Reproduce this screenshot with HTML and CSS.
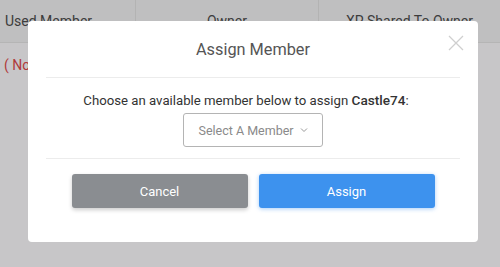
FILE: index.html
```html
<!DOCTYPE html>
<html lang="en">
  <head>
    <meta charset="UTF-8" />
    <meta name="viewport" content="width=device-width, initial-scale=1.0" />
    <title>Assign Member</title>
    <link rel="stylesheet" href="styles.css">
  </head>
  <body>
    <table class="members">
      <thead>
        <tr>
          <th class="col-used">Used Member</th>
          <th class="col-owner">Owner</th>
          <th class="col-xp">XP Shared To Owner</th>
        </tr>
      </thead>
      <tbody>
        <tr>
          <td class="none">( None )</td>
          <td></td>
          <td></td>
        </tr>
      </tbody>
    </table>

    <div class="overlay">
      <div class="modal">
        <button class="close-btn" aria-label="Close">
          <svg width="16" height="16" viewBox="0 0 16 16">
            <path d="M1 1 L15 15 M15 1 L1 15" stroke="#cfcfcf" stroke-width="1.3" fill="none" />
          </svg>
        </button>
        <div class="modal-header">
          <h2>Assign Member</h2>
        </div>
        <div class="modal-body">
          <p>Choose an available member below to assign <strong>Castle74</strong>:</p>
          <button class="select-btn">
            Select A Member
            <svg width="8" height="6" viewBox="0 0 8 6">
              <path d="M1 1.5 L4 4.5 L7 1.5" stroke="#999" stroke-width="1" fill="none" />
            </svg>
          </button>
        </div>
        <div class="modal-footer">
          <button class="btn btn-cancel">Cancel</button>
          <button class="btn btn-assign">Assign</button>
        </div>
      </div>
    </div>
  </body>
</html>
```

FILE: styles.css
```css
body {
  font-family: Roboto, "Liberation Sans", sans-serif;
  margin: 0;
  background: #c7c6c8;
  width: 500px;
  height: 267px;
  overflow: hidden;
}
.members {
  width: 100%;
  border-collapse: collapse;
  font-size: 14px;
  color: #3c3c3c;
}
.members th {
  height: 42px;
  background: #bfbfc0;
  font-weight: normal;
  border-right: 1px solid #b3b3b3;
  border-bottom: 1px solid #b5b5b5;
  padding: 0 5px;
}
.members th:last-child {
  border-right: none;
}
.col-used {
  width: 125px;
  text-align: left;
}
.col-owner {
  width: 172px;
}
.members td {
  height: 44px;
  padding: 0 4px;
}
.none {
  color: #b03a3a;
}
.overlay {
  position: fixed;
  inset: 0;
}
.modal {
  position: absolute;
  left: 28px;
  top: 21px;
  width: 450px;
  height: 221px;
  background: white;
  border-radius: 4px;
}
.close-btn {
  position: absolute;
  right: 14px;
  top: 14px;
  background: none;
  border: none;
  padding: 0;
  cursor: pointer;
}
.modal-header {
  margin: 0 18px;
  padding: 19px 0 17px;
  border-bottom: 1px solid #ececec;
  text-align: center;
}
.modal-header h2 {
  margin: 0;
  font-size: 16.3px;
  line-height: 20px;
  font-weight: normal;
  color: #555;
}
.modal-body {
  margin: 0 18px;
  padding: 14px 0 11px;
  border-bottom: 1px solid #ececec;
  text-align: center;
}
.modal-body p {
  margin: 0 0 4px;
  padding-right: 14px;
  font-size: 13.2px;
  line-height: 16px;
  color: #333;
}
.modal-body strong {
  font-size: 13.6px;
  font-weight: 500;
}
.select-btn {
  width: 140px;
  height: 34px;
  background: white;
  border: 1px solid #b4b4b4;
  border-radius: 3px;
  font-family: inherit;
  font-size: 12.5px;
  color: #8a8a8a;
  display: inline-flex;
  align-items: center;
  justify-content: center;
  gap: 6px;
}
.modal-footer {
  display: flex;
  justify-content: center;
  gap: 11px;
  padding-top: 15px;
}
.btn {
  width: 176px;
  height: 34px;
  border: none;
  border-radius: 3px;
  color: white;
  font-family: inherit;
  font-size: 13px;
  cursor: pointer;
}
.btn-cancel {
  background: #8a8d91;
  box-shadow: 0 2px 4px rgba(0, 0, 0, 0.2);
}
.btn-assign {
  background: #3d92ee;
  box-shadow: 0 1px 4px rgba(61, 146, 238, 0.45);
}
```
